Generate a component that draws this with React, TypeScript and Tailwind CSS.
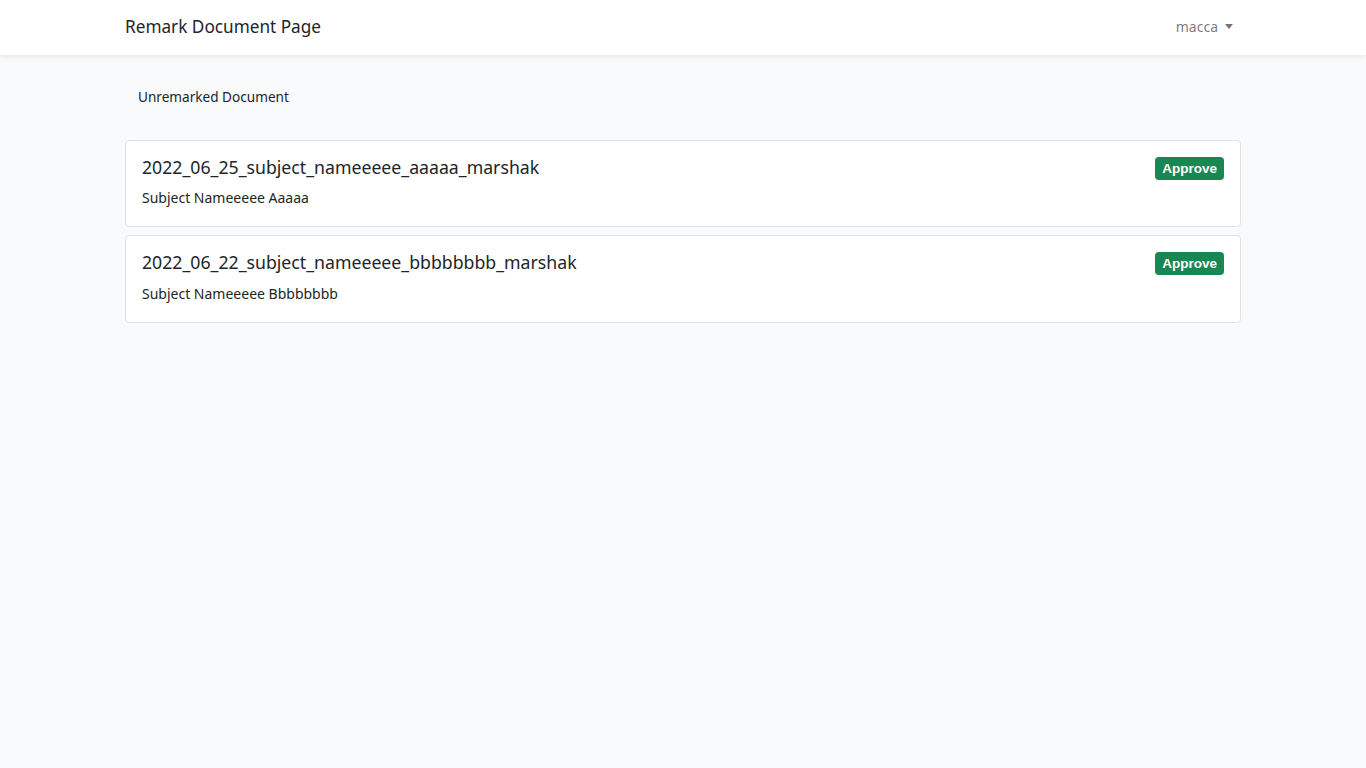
import React from "react";

const docs = [
  { file: "2022_06_25_subject_nameeeee_aaaaa_marshak", name: "Subject Nameeeee Aaaaa" },
  { file: "2022_06_22_subject_nameeeee_bbbbbbbb_marshak", name: "Subject Nameeeee Bbbbbbbb" },
];

export default function App() {
  return (
    <div
      className="min-h-[768px] bg-[#f8fafc] text-[#212529] text-[14px] leading-[1.6]"
      style={{ fontFamily: '"Noto Sans", "Open Sans", sans-serif' }}
    >
      <nav className="bg-white h-[55px] shadow-[0_2px_4px_rgba(0,0,0,0.075)]">
        <div className="max-w-[1140px] mx-auto px-3 h-full flex items-center justify-between">
          <span className="text-[17.2px] text-[#212529] mb-[1px]">Remark Document Page</span>
          <span className="flex items-center text-[14px] text-[rgba(0,0,0,0.55)] mr-2">
            macca
            <span className="ml-[7px] mb-[2px] w-0 h-0 border-l-[4.5px] border-r-[4.5px] border-t-[5px] border-l-transparent border-r-transparent border-t-[rgba(0,0,0,0.55)]" />
          </span>
        </div>
      </nav>
      <main className="max-w-[1140px] mx-auto px-3 pt-[31px]">
        <div className="px-[13px] mb-[32px] text-[13.6px]">Unremarked Document</div>
        <div className="flex flex-col gap-2">
          {docs.map((d) => (
            <div key={d.file} className="bg-white border border-[#dfe1e3] rounded-[4px] p-4 flex justify-between items-start">
              <div>
                <div className="text-[17.7px] leading-[21.6px] mb-2">{d.file}</div>
                <div className="leading-[24px]">{d.name}</div>
              </div>
              <span
                className="bg-[#198754] text-white font-bold text-[13.5px] leading-none rounded-[4px] px-[7px] h-[23px] flex items-center"
                style={{ fontFamily: '"Liberation Sans", Arial, sans-serif' }}
              >
                Approve
              </span>
            </div>
          ))}
        </div>
      </main>
    </div>
  );
}
